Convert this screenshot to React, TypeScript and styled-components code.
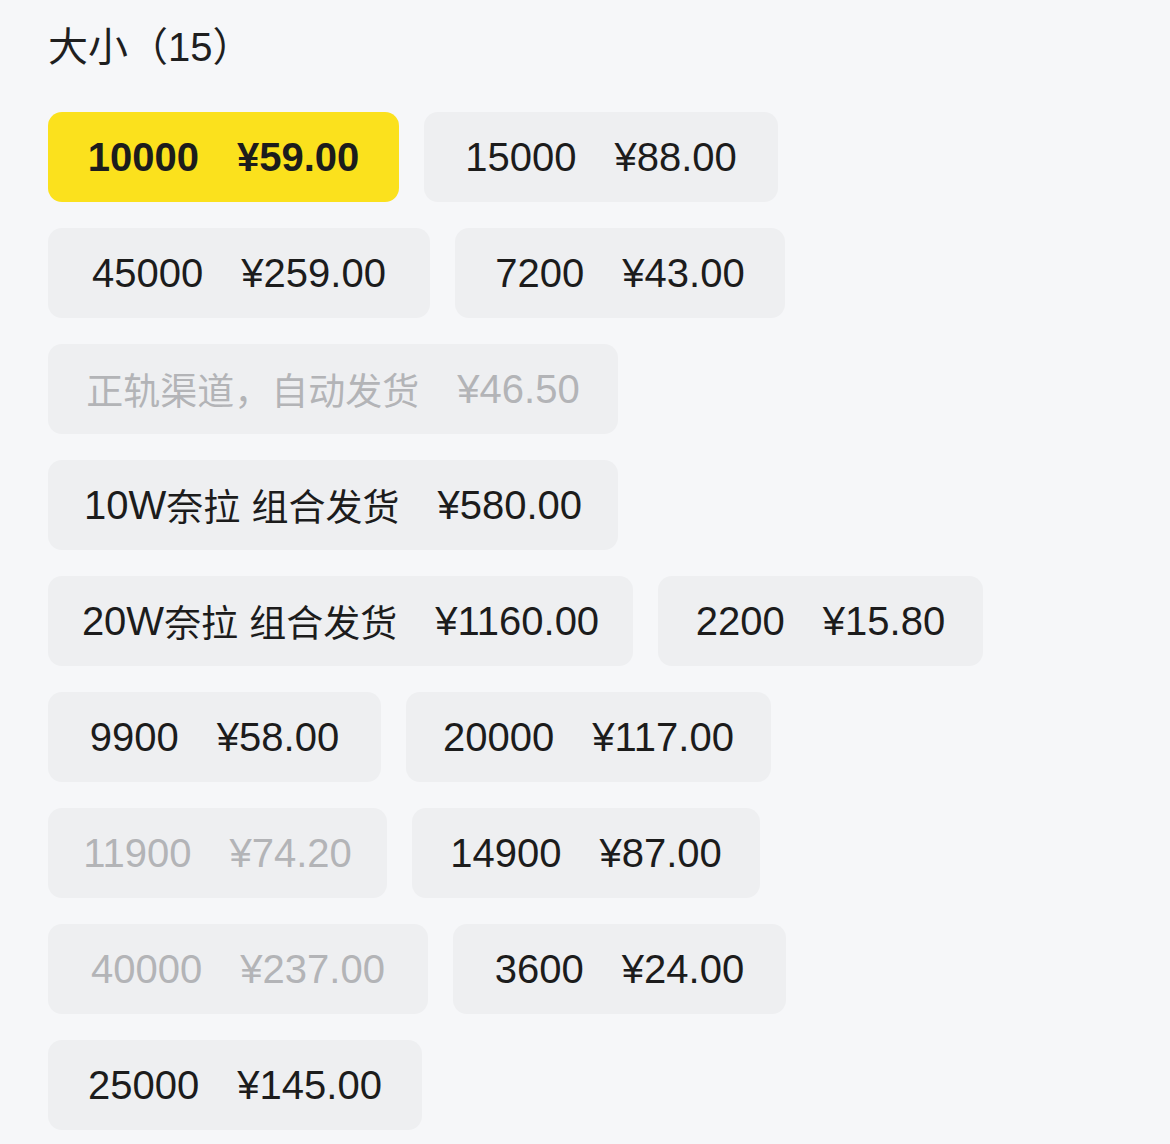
import styled, { createGlobalStyle } from "styled-components";

const GlobalStyle = createGlobalStyle`
  html, body {
    margin: 0;
    padding: 0;
    background: #f6f7f9;
  }
  * {
    box-sizing: border-box;
  }
`;

const Page = styled.div`
  min-height: 1144px;
  padding: 26px 48px 0 48px;
  background: #f6f7f9;
  font-family: "Liberation Sans", "Noto Sans CJK SC", sans-serif;
`;

const Title = styled.h2`
  margin: 0 0 44px 0;
  font-weight: 400;
  font-size: 40px;
  line-height: 42px;
  color: #1f1f1f;
  font-family: "Liberation Sans", "Noto Sans CJK SC", sans-serif;
`;

const Options = styled.div`
  width: 1000px;
  display: flex;
  flex-wrap: wrap;
  column-gap: 25px;
  row-gap: 26px;
`;

const Chip = styled.div<{ $w: number; $selected?: boolean; $disabled?: boolean }>`
  width: ${(p) => p.$w}px;
  height: 90px;
  border-radius: 14px;
  display: flex;
  align-items: center;
  justify-content: center;
  gap: 38px;
  font-size: 40px;
  line-height: 1;
  white-space: nowrap;
  background: ${(p) => (p.$selected ? "#fbe11d" : "#eeeff1")};
  color: ${(p) => (p.$disabled ? "#b3b4b7" : "#1c1c1c")};
  font-weight: ${(p) => (p.$selected ? 700 : 400)};
`;

const Label = styled.span`
  display: inline-flex;
  align-items: center;
`;

const Han = styled.span`
  font-family: "Noto Sans CJK SC", sans-serif;
  font-size: 37px;
`;

const Price = styled.span``;

interface Option {
  label: string;
  price: string;
  w: number;
  selected?: boolean;
  disabled?: boolean;
}

const options: Option[] = [
  { label: "10000", price: "¥59.00", w: 351, selected: true },
  { label: "15000", price: "¥88.00", w: 354 },
  { label: "45000", price: "¥259.00", w: 382 },
  { label: "7200", price: "¥43.00", w: 330 },
  { label: "正轨渠道，自动发货", price: "¥46.50", w: 570, disabled: true },
  { label: "10W奈拉 组合发货", price: "¥580.00", w: 570 },
  { label: "20W奈拉 组合发货", price: "¥1160.00", w: 585 },
  { label: "2200", price: "¥15.80", w: 325 },
  { label: "9900", price: "¥58.00", w: 333 },
  { label: "20000", price: "¥117.00", w: 365 },
  { label: "11900", price: "¥74.20", w: 339, disabled: true },
  { label: "14900", price: "¥87.00", w: 348 },
  { label: "40000", price: "¥237.00", w: 380, disabled: true },
  { label: "3600", price: "¥24.00", w: 333 },
  { label: "25000", price: "¥145.00", w: 374 },
];

// split mixed text so the CJK runs get their own size
const renderLabel = (text: string) =>
  text.split(/([\u3000-\u303f\u4e00-\u9fff\uff00-\uffef]+)/).map((part, i) =>
    /[\u3000-\u303f\u4e00-\u9fff\uff00-\uffef]/.test(part) ? (
      <Han key={i}>{part}</Han>
    ) : part ? (
      <span key={i}>{part.replace(/ /g, "\u00a0")}</span>
    ) : null
  );

const App = () => {
  return (
    <>
      <GlobalStyle />
      <Page>
        <Title>大小（15）</Title>
        <Options>
          {options.map((o) => (
            <Chip key={o.label} $w={o.w} $selected={o.selected} $disabled={o.disabled}>
              <Label>{renderLabel(o.label)}</Label>
              <Price>{o.price}</Price>
            </Chip>
          ))}
        </Options>
      </Page>
    </>
  );
};

export default App;
